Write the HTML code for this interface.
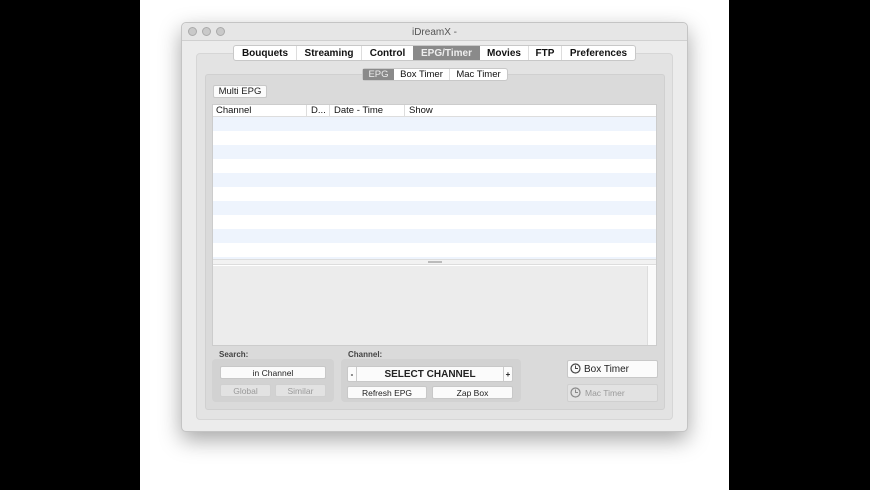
<!DOCTYPE html>
<html><head><style>
*{box-sizing:border-box;margin:0;padding:0}
body{width:870px;height:490px;background:#fff;position:relative;overflow:hidden;font-family:"Liberation Sans",sans-serif;font-size:10px;color:#111}
.a{position:absolute}
.btn{position:absolute;background:#fbfbfb;border:1px solid #c8c8c8;border-radius:2px;text-align:center;font-size:9px;color:#222}
.dis{background:#e2e2e2;color:#999;border-color:#d0d0d0}
</style></head><body>
<div class="a" style="left:0;top:0;width:140px;height:490px;background:#000"></div>
<div class="a" style="left:729px;top:0;width:141px;height:490px;background:#000"></div>
<div class="a" style="left:181px;top:22px;width:507px;height:410px;background:#ececec;border:1px solid #c4c4c4;border-radius:5px;box-shadow:0 8px 22px rgba(0,0,0,.35)"></div>
<div class="a" style="left:182px;top:23px;width:505px;height:18px;background:#e6e6e6;border-bottom:1px solid #d0d0d0;border-radius:5px 5px 0 0"></div>
<div class="a" style="left:188px;top:27px;width:9px;height:9px;border-radius:50%;background:#c9c9c9;border:1px solid #aaa"></div>
<div class="a" style="left:202px;top:27px;width:9px;height:9px;border-radius:50%;background:#c9c9c9;border:1px solid #aaa"></div>
<div class="a" style="left:216px;top:27px;width:9px;height:9px;border-radius:50%;background:#c9c9c9;border:1px solid #aaa"></div>
<div class="a" style="left:182px;top:27px;width:505px;text-align:center;font-size:10px;color:#555">iDreamX -</div>
<div class="a" style="left:196px;top:53px;width:477px;height:367px;background:#e3e3e3;border:1px solid #d6d6d6;border-radius:4px"></div>
<div class="a" style="left:233px;top:45px;width:403px;height:16px;background:#fff;border:1px solid #c8c8c8;border-radius:3px;display:flex;font-weight:bold;font-size:10px;line-height:16px">
<div style="width:63px;text-align:center;border-right:1px solid #ddd">Bouquets</div>
<div style="width:65px;text-align:center;border-right:1px solid #ddd">Streaming</div>
<div style="width:51px;text-align:center">Control</div>
<div style="width:67px;text-align:center;background:#8a8a8a;color:#eee">EPG/Timer</div>
<div style="width:49px;text-align:center;border-right:1px solid #ddd">Movies</div>
<div style="width:33px;text-align:center;border-right:1px solid #ddd">FTP</div>
<div style="flex:1;text-align:center">Preferences</div></div>
<div class="a" style="left:205px;top:74px;width:460px;height:336px;background:#dadada;border:1px solid #d0d0d0;border-radius:3px"></div>
<div class="a" style="left:362px;top:68px;width:146px;height:13px;background:#fff;border:1px solid #c8c8c8;border-radius:3px;display:flex;font-size:9.5px;line-height:12px">
<div style="width:31px;text-align:center;background:#8a8a8a;color:#eee">EPG</div>
<div style="width:56px;text-align:center;border-right:1px solid #ddd">Box Timer</div>
<div style="flex:1;text-align:center">Mac Timer</div></div>
<div class="btn" style="left:213px;top:85px;width:54px;height:13px;line-height:12px;font-size:9.5px">Multi EPG</div>
<div class="a" style="left:212px;top:104px;width:445px;height:242px;background:#fff;border:1px solid #ccc"></div>
<div class="a" style="left:213px;top:105px;width:443px;height:12px;font-size:9.5px;line-height:12px;border-bottom:1px solid #ddd">
<span class="a" style="left:3px">Channel</span><span class="a" style="left:93px;border-left:1px solid #ddd;padding-left:4px;height:12px">D...</span><span class="a" style="left:116px;border-left:1px solid #ddd;padding-left:4px;height:12px">Date - Time</span><span class="a" style="left:191px;border-left:1px solid #ddd;padding-left:4px;height:12px">Show</span></div>
<div class="a" style="left:213px;top:117px;width:443px;height:143px;background:repeating-linear-gradient(#eef4fd 0 14px,#fff 14px 28px)"></div>
<div class="a" style="left:213px;top:259px;width:443px;height:6px;background:#f2f2f2;border-top:1px solid #ddd;border-bottom:1px solid #ddd"></div>
<div class="a" style="left:428px;top:261px;width:14px;height:2px;border-top:1px solid #bbb;border-bottom:1px solid #bbb"></div>
<div class="a" style="left:213px;top:266px;width:434px;height:79px;background:#ececec"></div>
<div class="a" style="left:647px;top:266px;width:9px;height:79px;background:#fafafa;border-left:1px solid #ddd"></div>
<div class="a" style="left:219px;top:350px;font-size:8px;font-weight:bold;color:#444">Search:</div>
<div class="a" style="left:212px;top:359px;width:122px;height:43px;background:#d2d2d2;border-radius:4px"></div>
<div class="btn" style="left:220px;top:366px;width:106px;height:13px;line-height:12px;font-size:8.5px">in Channel</div>
<div class="btn dis" style="left:220px;top:384px;width:51px;height:13px;line-height:12px;font-size:8.5px">Global</div>
<div class="btn dis" style="left:275px;top:384px;width:51px;height:13px;line-height:12px;font-size:8.5px">Similar</div>
<div class="a" style="left:348px;top:350px;font-size:8px;font-weight:bold;color:#444">Channel:</div>
<div class="a" style="left:341px;top:359px;width:180px;height:43px;background:#d2d2d2;border-radius:4px"></div>
<div class="btn" style="left:347px;top:366px;width:166px;height:16px;line-height:15px;font-size:10px;font-weight:bold;display:flex">
<span style="width:9px;border-right:1px solid #ccc;font-size:8px">-</span><span style="flex:1">SELECT CHANNEL</span><span style="width:9px;border-left:1px solid #ccc;font-size:8px">+</span></div>
<div class="btn" style="left:347px;top:386px;width:80px;height:13px;line-height:12px;font-size:8.5px">Refresh EPG</div>
<div class="btn" style="left:432px;top:386px;width:81px;height:13px;line-height:12px;font-size:8.5px">Zap Box</div>
<div class="btn" style="left:567px;top:360px;width:91px;height:18px;line-height:17px;font-size:10px;text-align:left;padding-left:16px">Box Timer</div>
<svg class="a" style="left:570px;top:363px" width="11" height="11"><circle cx="5.5" cy="5.5" r="4.5" fill="none" stroke="#444" stroke-width="1.2"/><path d="M5.5 2.5V5.5H8" fill="none" stroke="#444"/></svg>
<div class="btn dis" style="left:567px;top:384px;width:91px;height:18px;line-height:17px;font-size:8.5px;text-align:left;padding-left:17px">Mac Timer</div>
<svg class="a" style="left:570px;top:387px" width="11" height="11"><circle cx="5.5" cy="5.5" r="4.5" fill="none" stroke="#888" stroke-width="1.2"/><path d="M5.5 2.5V5.5H8" fill="none" stroke="#888"/></svg>
</body></html>
